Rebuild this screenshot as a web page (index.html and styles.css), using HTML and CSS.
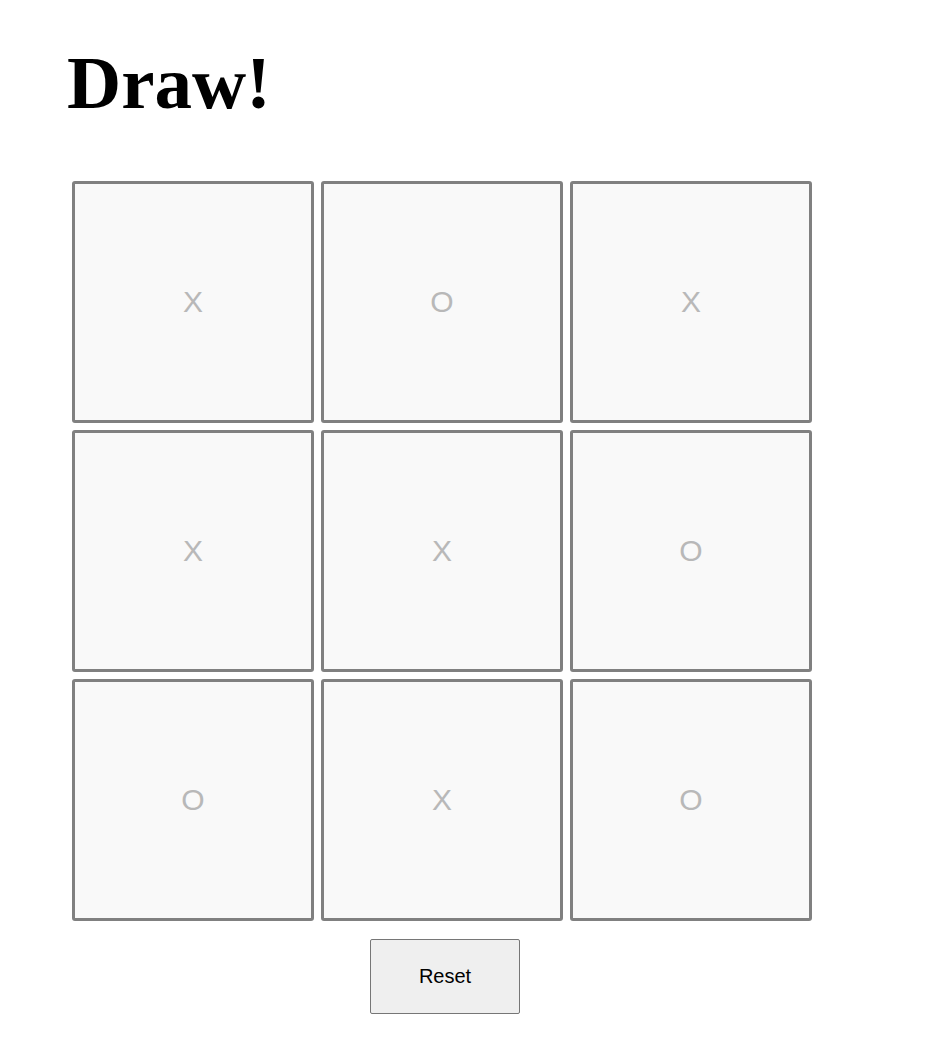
FILE: index.html
```html
<!DOCTYPE html>
<html>
<head>
<meta charset="utf-8">
<link rel="stylesheet" href="styles.css">
<title>Tic Tac Toe</title>
</head>
<body>
<div class="game">
  <h1 class="status">Draw!</h1>
  <div class="board">
    <button class="cell">X</button>
    <button class="cell">O</button>
    <button class="cell">X</button>
    <button class="cell">X</button>
    <button class="cell">X</button>
    <button class="cell">O</button>
    <button class="cell">O</button>
    <button class="cell">X</button>
    <button class="cell">O</button>
  </div>
  <div class="actions">
    <button class="reset">Reset</button>
  </div>
</div>
</body>
</html>
```
FILE: styles.css
```css
html, body {
  margin: 0;
  padding: 0;
  background: #ffffff;
}
.game {
  padding: 0 0 0 67px;
  width: 745px;
}
.status {
  margin: 0;
  padding-top: 40px;
  height: 181px;
  box-sizing: border-box;
  font-family: "Liberation Serif", serif;
  font-weight: bold;
  font-size: 75px;
  line-height: 85px;
  color: #000;
}
.board {
  display: grid;
  grid-template-columns: repeat(3, 242px);
  grid-template-rows: repeat(3, 242px);
  gap: 7px;
  margin-left: 5px;
}
.cell {
  box-sizing: border-box;
  width: 242px;
  height: 242px;
  margin: 0;
  padding: 0;
  border: 3px solid #808080;
  border-radius: 3px;
  background: #f9f9f9;
  color: #b8b8b8;
  font-family: "Liberation Sans", Arial, sans-serif;
  font-size: 30px;
}
.actions {
  display: flex;
  justify-content: center;
  padding-left: 11px;
  margin-top: 18px;
}
.reset {
  box-sizing: border-box;
  width: 150px;
  height: 75px;
  margin: 0;
  border: 1px solid #767676;
  border-radius: 2px;
  background: #efefef;
  color: #000;
  font-family: "Liberation Sans", Arial, sans-serif;
  font-size: 20px;
}
```
